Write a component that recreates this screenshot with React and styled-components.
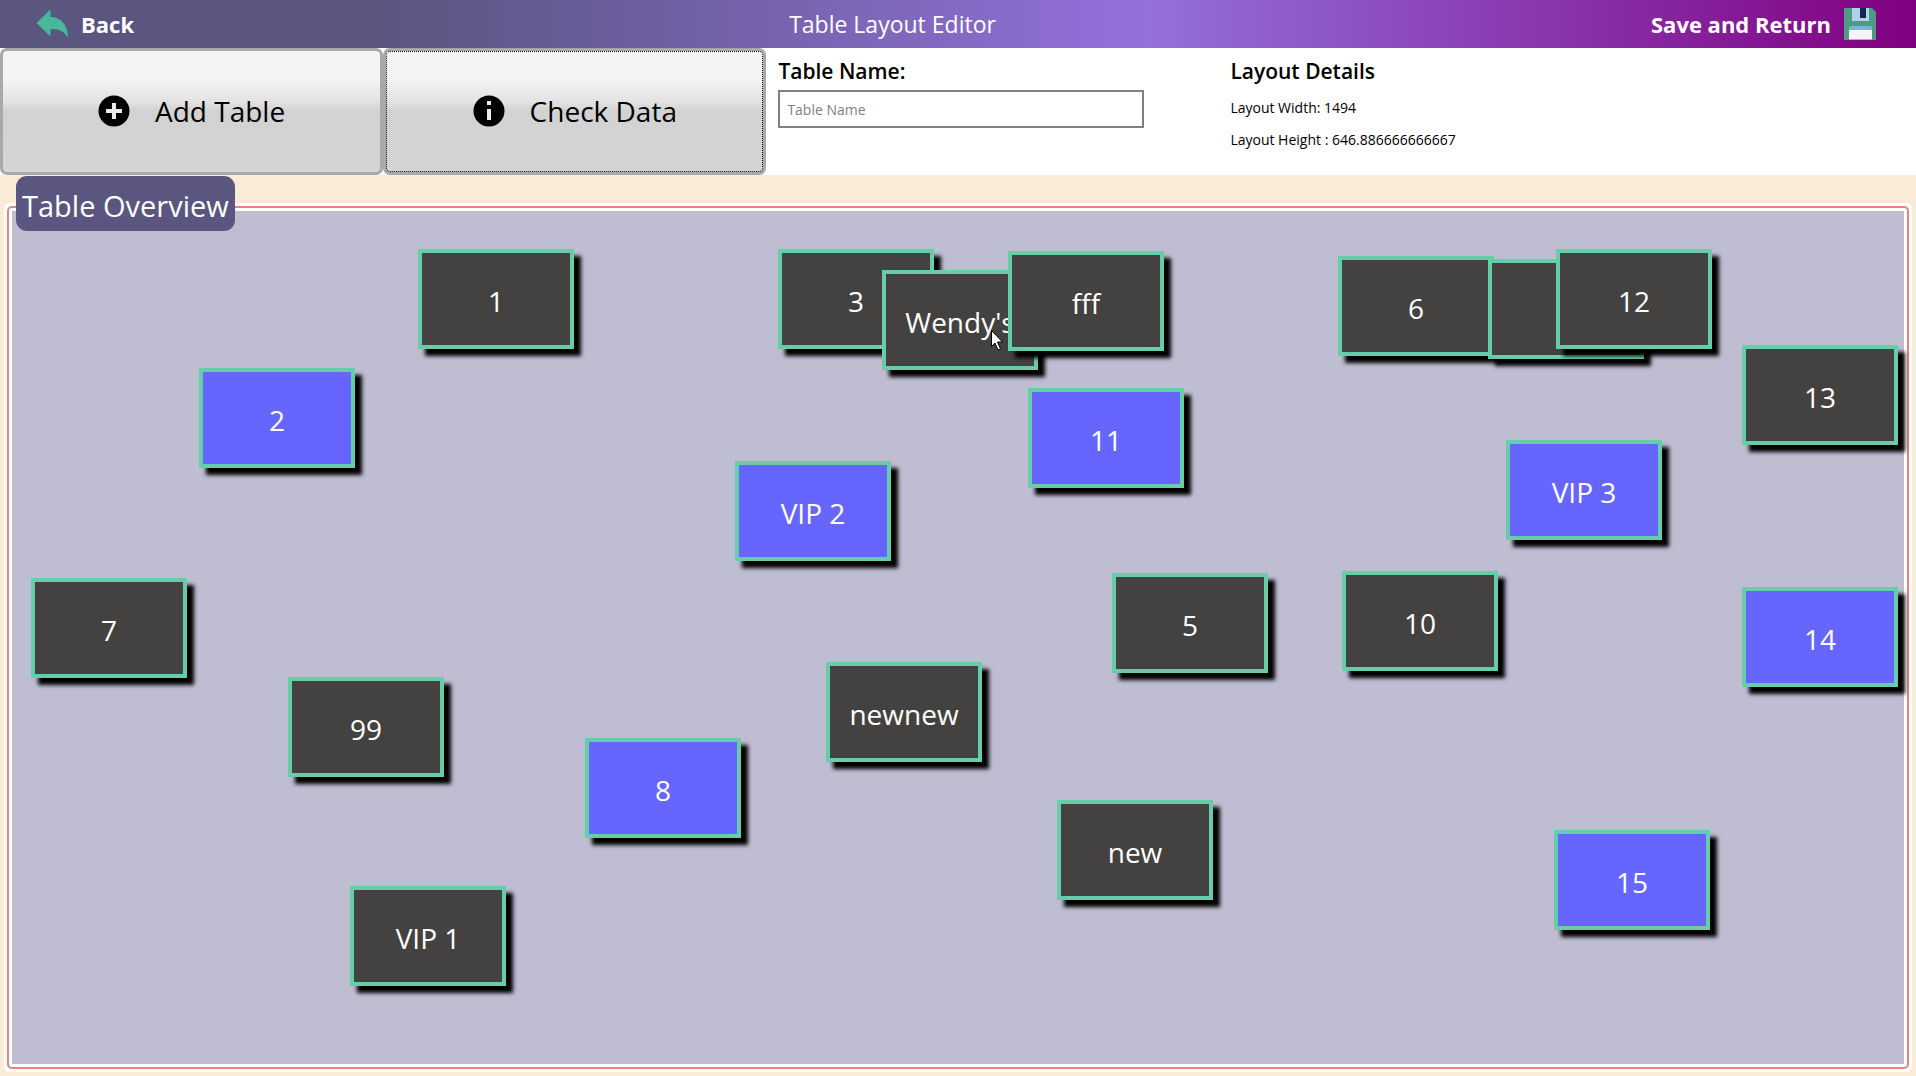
import React, { useState } from "react";
import styled, { createGlobalStyle } from "styled-components";

const GlobalStyle = createGlobalStyle`
  * { box-sizing: border-box; }
  body {
    margin: 0;
    background: #faebd7;
    font-family: "Open Sans", "Noto Sans", sans-serif;
    color: #000;
  }
  button, input { font-family: inherit; }
`;

const Page = styled.div`
  display: flex;
  flex-direction: column;
  min-height: 100vh;
`;

const Header = styled.header`
  display: flex;
  align-items: center;
  justify-content: space-between;
  height: 48px;
  padding: 0 40px 0 36px;
  color: #fff;
  background: linear-gradient(90deg, #5a5680 20%, #9370db 60%, #800080 100%);
`;

const HeaderTitle = styled.h1`
  margin: 0;
  font-size: 23px;
  line-height: 32px;
  font-weight: 500;
`;

const HeaderButton = styled.button`
  display: flex;
  align-items: center;
  gap: 13px;
  padding: 0;
  border: 0;
  background: none;
  color: #fff;
  font-size: 22px;
  line-height: 32px;
  font-weight: 700;
`;

const Toolbar = styled.div`
  display: grid;
  grid-template-columns: 20% 20% 452px 1fr;
  min-height: 127px;
  background: #fff;
`;

const ToolButton = styled.button`
  display: flex;
  align-items: center;
  justify-content: center;
  gap: 25px;
  padding: 0 0 2px;
  border: 3px solid #a9a9a9;
  border-radius: 7px;
  background: linear-gradient(#f4f4f4 24%, #e3e1e1 42%, #d1d2d1 50%, #d3d4d3 100%);
  color: #000;
  font-size: 28px;
  line-height: 40px;
  outline: ${(p) => (p.$focused ? "1px dotted #000" : "none")};
  outline-offset: -4px;
`;

const Panel = styled.div`
  display: flex;
  flex-direction: column;
  padding: 7px 12px;
`;

const PanelLabel = styled.label`
  font-size: 21px;
  line-height: 32px;
  font-weight: 600;
`;

const PanelHeading = styled.h2`
  margin: 0 0 5px;
  font-size: 21px;
  line-height: 32px;
  font-weight: 600;
`;

const Detail = styled.p`
  margin: 0;
  font-size: 14px;
  line-height: 32px;
`;

const TextBox = styled.input`
  width: 366px;
  height: 38px;
  margin-top: 3px;
  padding: 0 7px;
  border: 2px solid #7f7f86;
  background: #fff;
  font-size: 14px;
  &::placeholder { color: #808080; opacity: 1; }
`;

const Overview = styled.section`
  flex: 1;
  display: grid;
  grid-template: minmax(0, 1fr) / minmax(0, 1fr);
  padding: 1px 4px 4px;
`;

const OverviewTitle = styled.h2`
  grid-area: 1 / 1;
  align-self: start;
  justify-self: start;
  z-index: 1;
  margin: 0 0 0 12px;
  padding: 10px 6px 5px;
  border-radius: 11px;
  background: #5a5680;
  color: #fff;
  font-size: 29px;
  line-height: 40px;
  font-weight: 400;
`;

const Frame = styled.div`
  grid-area: 1 / 1;
  display: flex;
  margin-top: 27px;
  padding: 3px;
  border-radius: 6px;
  background: #fff;
`;

const FrameLine = styled.div`
  flex: 1;
  display: flex;
  padding: 3px;
  border: 2px solid #f08080;
  border-radius: 5px;
`;

const Canvas = styled.div`
  flex: 1;
  position: relative;
  min-height: 640px;
  background: #bfbdd2;
`;

const TableNode = styled.button`
  position: absolute;
  left: ${(p) => p.$x}px;
  top: ${(p) => p.$y}px;
  width: 156px;
  height: 100px;
  padding: 4px 0 0;
  border: 4px solid #66cdaa;
  background: ${(p) => (p.$active ? "#6666ff" : "#444240")};
  box-shadow: 7px 7px 4px #000;
  color: #fff;
  font-size: 28px;
  line-height: 40px;
  font-weight: 500;
  white-space: nowrap;
`;

const Pointer = styled.svg`
  position: absolute;
  left: 979px;
  top: 119px;
  pointer-events: none;
`;

const tables = [
  { name: "1", x: 406, y: 38 },
  { name: "2", x: 187, y: 157, active: true },
  { name: "3", x: 766, y: 38 },
  { name: "Wendy's", x: 870, y: 59 },
  { name: "fff", x: 996, y: 40 },
  { name: "6", x: 1326, y: 45 },
  { name: "", x: 1476, y: 48 },
  { name: "12", x: 1544, y: 38 },
  { name: "13", x: 1730, y: 134 },
  { name: "11", x: 1016, y: 177, active: true },
  { name: "VIP 2", x: 723, y: 250, active: true },
  { name: "VIP 3", x: 1494, y: 229, active: true },
  { name: "7", x: 19, y: 367 },
  { name: "5", x: 1100, y: 362 },
  { name: "10", x: 1330, y: 360 },
  { name: "14", x: 1730, y: 376, active: true },
  { name: "99", x: 276, y: 466 },
  { name: "8", x: 573, y: 527, active: true },
  { name: "newnew", x: 814, y: 451 },
  { name: "new", x: 1045, y: 589 },
  { name: "15", x: 1542, y: 619, active: true },
  { name: "VIP 1", x: 338, y: 675 },
];

const BackIcon = () => (
  <svg width="32" height="30" viewBox="0 0 32 30" aria-hidden="true">
    <path d="M0.5 14 L14.5 0.5 V8 C25 8 32 16 32 29 C28 21.500 22 20 14.500 20 V27.500 Z" fill="#46b99a" />
  </svg>
);

const SaveIcon = () => (
  <svg width="32" height="32" viewBox="0 0 32 32" aria-hidden="true">
    <path d="M0 0H28L32 4V32H0Z" fill="#4f9a83" />
    <path d="M8 0H25V13H8Z" fill="#b0d3ec" />
    <path d="M16 0H22V10H16Z" fill="#12284a" />
    <path d="M5 22V20Q5 18 7 18H26Q28 18 28 20V22Z" fill="#7cb5d2" />
    <path d="M5 22H28V31H5Z" fill="#f5f5f8" />
    <path d="M5 31H28V32H5Z" fill="#d9a3a3" />
  </svg>
);

const AddIcon = () => (
  <svg width="32" height="32" viewBox="0 0 32 32" aria-hidden="true">
    <circle cx="16" cy="16" r="15.500" />
    <path d="M14 8h4v6h6v4h-6v6h-4v-6H8v-4h6Z" fill="#ebebeb" />
  </svg>
);

const InfoIcon = () => (
  <svg width="32" height="32" viewBox="0 0 32 32" aria-hidden="true">
    <circle cx="16" cy="16" r="15.500" />
    <path d="M14 6h4v4h-4ZM14 14h4v11h-4Z" fill="#ebebeb" />
  </svg>
);

export default function App() {
  const [tableName, setTableName] = useState("");
  return (
    <Page>
      <GlobalStyle />
      <Header>
        <HeaderButton type="button"><BackIcon />Back</HeaderButton>
        <HeaderTitle>Table Layout Editor</HeaderTitle>
        <HeaderButton type="button">Save and Return<SaveIcon /></HeaderButton>
      </Header>
      <Toolbar>
        <ToolButton type="button"><AddIcon />Add Table</ToolButton>
        <ToolButton type="button" $focused><InfoIcon />Check Data</ToolButton>
        <Panel>
          <PanelLabel htmlFor="table-name">Table Name:</PanelLabel>
          <TextBox
            id="table-name"
            type="text"
            placeholder="Table Name"
            value={tableName}
            onChange={(e) => setTableName(e.target.value)}
          />
        </Panel>
        <Panel>
          <PanelHeading>Layout Details</PanelHeading>
          <Detail>Layout Width: 1494</Detail>
          <Detail>Layout Height : 646.886666666667</Detail>
        </Panel>
      </Toolbar>
      <Overview>
        <OverviewTitle>Table Overview</OverviewTitle>
        <Frame>
          <FrameLine>
            <Canvas>
              {tables.map((t, i) => (
                <TableNode key={i} type="button" $x={t.x} $y={t.y} $active={t.active}>
                  {t.name}
                </TableNode>
              ))}
              <Pointer width="13" height="21" viewBox="0 0 13 21" aria-hidden="true">
                <path d="M0.5 0.500V16.500L4 13L7 20L9.500 19L6.500 12H11.500Z" fill="#fff" stroke="#000" />
              </Pointer>
            </Canvas>
          </FrameLine>
        </Frame>
      </Overview>
    </Page>
  );
}
